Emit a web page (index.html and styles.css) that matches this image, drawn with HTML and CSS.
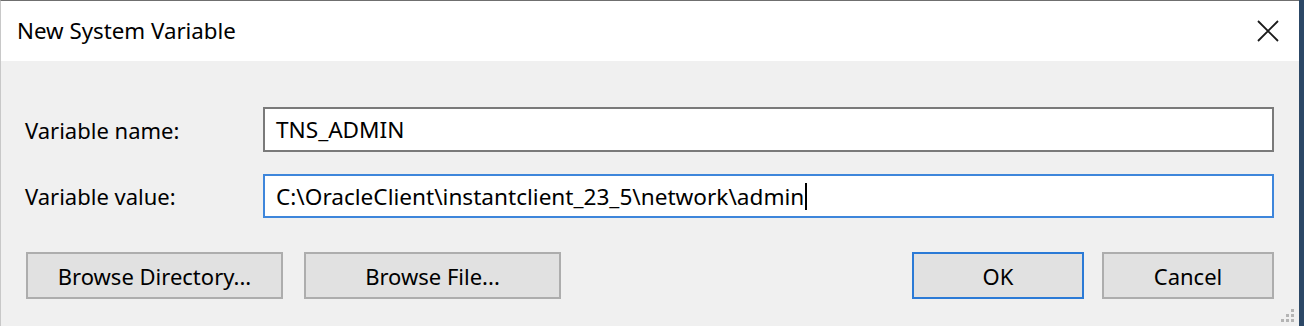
FILE: index.html
```html
<!DOCTYPE html>
<html lang="en-us">
<head>
<meta charset="UTF-8">
<title>New System Variable</title>
<link rel="stylesheet" href="styles.css">
</head>
<body>
<div class="screen">
  <div class="dialog">
    <div class="titlebar">
      <span class="title">New System Variable</span>
      <svg class="close" width="22" height="22" viewBox="0 0 22 22">
        <path d="M1 1 L21 21 M21 1 L1 21" stroke="#1a1a1a" stroke-width="1.8" fill="none"/>
      </svg>
    </div>

    <div class="content">
      <div class="row">
        <span class="label">Variable name:</span>
        <div class="field">TNS_ADMIN</div>
      </div>
      <div class="row">
        <span class="label">Variable value:</span>
        <div class="field focused">C:\OracleClient\instantclient_23_5\network\admin<span class="caret"></span></div>
      </div>

      <div class="buttons">
        <div class="group">
          <button class="btn wide">Browse Directory...</button>
          <button class="btn wide">Browse File...</button>
        </div>
        <div class="group right">
          <button class="btn default">OK</button>
          <button class="btn">Cancel</button>
        </div>
      </div>
    </div>

    <!-- resize grip -->
    <div class="grip">
      <i style="grid-area: 1 / 3"></i>
      <i style="grid-area: 2 / 2"></i><i style="grid-area: 2 / 3"></i>
      <i style="grid-area: 3 / 1"></i><i style="grid-area: 3 / 2"></i><i style="grid-area: 3 / 3"></i>
    </div>
  </div>
  <div class="desktop"></div>
</div>
</body>
</html>
```

FILE: styles.css
```css
body {
  margin: 0;
  background: #f0f0f0;
  font-family: "Noto Sans", "Open Sans", Arial, sans-serif;
  color: #000;
}

.screen {
  display: flex;
  width: 1304px;
  height: 326px;
  overflow: hidden;
}

.dialog {
  position: relative;
  width: 1298px;
  border-left: 1px solid #c8c8c8;
  border-top: 1px solid #6f6f6f;
  background: #f0f0f0;
}

.desktop {
  flex: 1;
  background: #2c4866;
}

.titlebar {
  height: 60px;
  background: #fff;
  display: flex;
  align-items: center;
  justify-content: space-between;
  padding: 0 20px 0 16px;
}

.title {
  font-size: 22.3px;
  margin-top: -1px;
}

.close {
  margin-top: -1px;
}

.content {
  padding: 46px 25px 0 24px;
}

.row {
  display: flex;
  align-items: center;
  margin-bottom: 22px;
}

.label {
  width: 238px;
  font-size: 22px;
}

.field {
  flex: 1;
  height: 41px;
  border: 2px solid #7a7a7a;
  background: #fff;
  font-size: 22.6px;
  padding-left: 11px;
  display: flex;
  align-items: center;
  white-space: pre;
}

.field.focused {
  height: 40px;
  border-color: #3e86db;
}

.caret {
  display: inline-block;
  width: 2px;
  height: 27px;
  background: #000;
  margin-left: 1px;
}

.buttons {
  display: flex;
  justify-content: space-between;
  margin-top: 34px;
  padding-left: 1px;
}

.group {
  display: flex;
  gap: 21px;
}

.group.right {
  gap: 18px;
}

.btn {
  width: 172px;
  height: 47px;
  background: #e1e1e1;
  border: 2px solid #adadad;
  font-family: inherit;
  font-size: 22px;
  color: #000;
  padding: 0;
}

.btn.wide {
  width: 257px;
}

.btn.default {
  border-color: #2b7ad6;
}

.grip {
  position: absolute;
  right: 5px;
  bottom: 4px;
  display: grid;
  grid-template-columns: repeat(3, 3px);
  grid-template-rows: repeat(3, 3px);
  gap: 2px;
}

.grip i {
  background: #b4b4b4;
}
```
